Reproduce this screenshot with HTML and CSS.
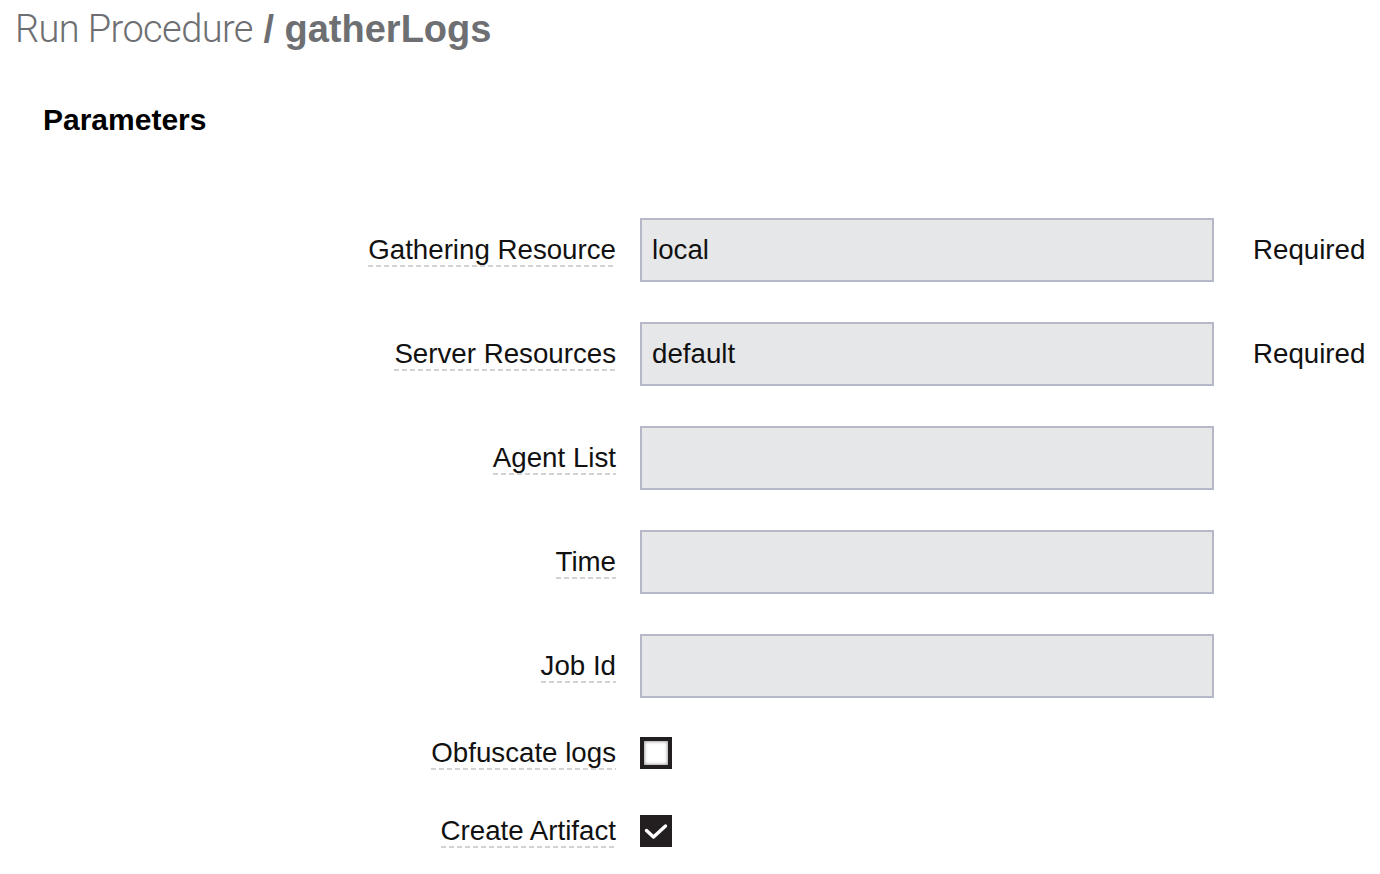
FILE: index.html
```html
<!DOCTYPE html>
<html lang="en">
<head>
<meta charset="utf-8">
<title>Run Procedure / gatherLogs</title>
<link rel="stylesheet" href="styles.css">
</head>
<body>
<header class="page-header">
  <h1 class="title"><span class="title-light">Run Procedure</span> <span class="title-bold">/ gatherLogs</span></h1>
</header>
<main class="content">
  <h2 class="section-title">Parameters</h2>
  <form class="params">
    <div class="field">
      <div class="label-cell"><label class="label" for="f1">Gathering Resource</label></div>
      <input class="text-input" id="f1" type="text" value="local">
      <span class="req">Required</span>
    </div>
    <div class="field">
      <div class="label-cell"><label class="label" for="f2">Server Resources</label></div>
      <input class="text-input" id="f2" type="text" value="default">
      <span class="req">Required</span>
    </div>
    <div class="field">
      <div class="label-cell"><label class="label" for="f3">Agent List</label></div>
      <input class="text-input" id="f3" type="text" value="">
      <span class="req"></span>
    </div>
    <div class="field">
      <div class="label-cell"><label class="label" for="f4">Time</label></div>
      <input class="text-input" id="f4" type="text" value="">
      <span class="req"></span>
    </div>
    <div class="field">
      <div class="label-cell"><label class="label" for="f5">Job Id</label></div>
      <input class="text-input" id="f5" type="text" value="">
      <span class="req"></span>
    </div>
    <div class="check-row first">
      <div class="label-cell"><span class="label">Obfuscate logs</span></div>
      <span class="checkbox"></span>
    </div>
    <div class="check-row">
      <div class="label-cell"><span class="label">Create Artifact</span></div>
      <span class="checkbox checked">
        <svg width="24" height="24" viewBox="0 0 24 24"><path d="M2.5 11.5 L9.5 18 L21.5 7" fill="none" stroke="#fff" stroke-width="3.4" stroke-linecap="round" stroke-linejoin="round"/></svg>
      </span>
    </div>
  </form>
</main>
</body>
</html>
```
FILE: styles.css
```css
html, body {
  margin: 0;
  padding: 0;
  background: #fff;
}
body {
  font-family: "Liberation Sans", Arial, Helvetica, sans-serif;
  color: #111;
}
.page-header {
  padding: 7px 0 0 15px;
}
.title {
  margin: 0;
  font-size: 38px;
  line-height: 44px;
  color: #6d6f72;
  white-space: nowrap;
}
.title-light {
  font-family: "Roboto", "Liberation Sans", sans-serif;
  font-weight: 300;
  letter-spacing: -0.6px;
}
.title-bold {
  font-weight: 700;
}
.content {
  padding: 0;
}
.section-title {
  margin: 51px 0 0 43px;
  font-size: 30px;
  line-height: 36px;
  font-weight: 700;
  color: #000;
}
.params {
  display: flex;
  flex-direction: column;
  margin-top: 80px;
}
.field {
  display: flex;
  align-items: center;
  height: 64px;
  margin-bottom: 40px;
}
.label-cell {
  width: 616px;
  flex: 0 0 616px;
  text-align: right;
}
.label {
  display: inline-block;
  font-size: 27.7px;
  line-height: 31px;
  padding-bottom: 2px;
  margin-bottom: -1px;
  color: #111;
  background-image: linear-gradient(to right, #d2d2d2 0, #d2d2d2 5px, transparent 5px);
  background-size: 8px 2px;
  background-position: left bottom;
  background-repeat: repeat-x;
}
.text-input {
  box-sizing: border-box;
  width: 574px;
  height: 64px;
  margin: 0 0 0 24px;
  padding: 0 10px;
  border: 2px solid #b5b8c8;
  border-radius: 0;
  background: #e6e7e9;
  font-family: "Liberation Sans", Arial, sans-serif;
  font-size: 27.7px;
  color: #111;
  outline: none;
}
.req {
  margin-left: 39px;
  font-size: 27.7px;
  color: #111;
  white-space: nowrap;
}
.check-row {
  display: flex;
  align-items: center;
  height: 32px;
  margin-bottom: 46px;
}
.check-row.first {
  margin-top: -1px;
}
.checkbox {
  box-sizing: border-box;
  width: 32px;
  height: 32px;
  margin-left: 24px;
  border: 4px solid #231f20;
  background: #fff;
  box-shadow: inset 0 0 3px 1px rgba(0,0,0,0.35);
  display: flex;
  align-items: center;
  justify-content: center;
}
.checkbox.checked {
  background: #231f20;
  box-shadow: none;
}
```
